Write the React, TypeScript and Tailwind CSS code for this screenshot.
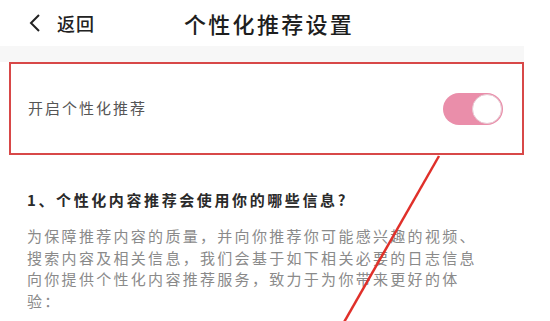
import React from "react";

const Toggle = () => (
  <div className="w-[60px] h-[32px] rounded-full bg-[#ea8eaa] relative">
    <div className="absolute right-[1px] top-[1px] w-[30px] h-[30px] rounded-full bg-white border border-[#e6c9d2]" />
  </div>
);

export default function App() {
  return (
    <div className="relative w-[550px] h-[321px] bg-white overflow-hidden font-['Noto_Sans_CJK_SC','Noto_Sans',sans-serif]">
      {/* header */}
      <div className="h-[46px] flex items-center pl-[27px]">
        <div className="flex items-center gap-[16px] text-[#222]">
          <svg width="14" height="20" viewBox="0 0 14 20" fill="none">
            <path d="M12 2 L4 10 L12 18" stroke="#222" strokeWidth="2" />
          </svg>
          <span className="text-[18px] tracking-[1px] font-medium">返回</span>
        </div>
        <span className="ml-[89px] text-[22px] tracking-[2.3px] font-medium text-[#1e1e1e]">
          个性化推荐设置
        </span>
      </div>

      <div className="w-[524px] h-[16px] bg-[#f7f7f7]" />

      {/* switch row */}
      <div className="ml-[9px] w-[515px] h-[93px] border-2 border-[#d84848] flex items-center justify-between pl-[17px] pr-[19px]">
        <span className="text-[15px] tracking-[2px] text-[#555]">开启个性化推荐</span>
        <Toggle />
      </div>

      {/* info */}
      <div className="pl-[27px] pt-[34px] pr-[40px]">
        <p className="text-[15px] tracking-[2.6px] font-bold text-[#2a2a2a] leading-[22px]">
          1、个性化内容推荐会使用你的哪些信息?
        </p>
        <p className="mt-[14px] text-[15px] tracking-[2.3px] text-[#8a8a8a] leading-[21.5px]">
          为保障推荐内容的质量，并向你推荐你可能感兴趣的视频、
          <br />
          搜索内容及相关信息，我们会基于如下相关必要的日志信息
          <br />
          向你提供个性化内容推荐服务，致力于为你带来更好的体
          <br />
          验：
        </p>
      </div>

      {/* annotation line */}
      <svg className="absolute left-0 top-0 pointer-events-none" width="550" height="321">
        <line x1="439" y1="156" x2="343" y2="324" stroke="#e0302a" strokeWidth="2.5" />
      </svg>
    </div>
  );
}
